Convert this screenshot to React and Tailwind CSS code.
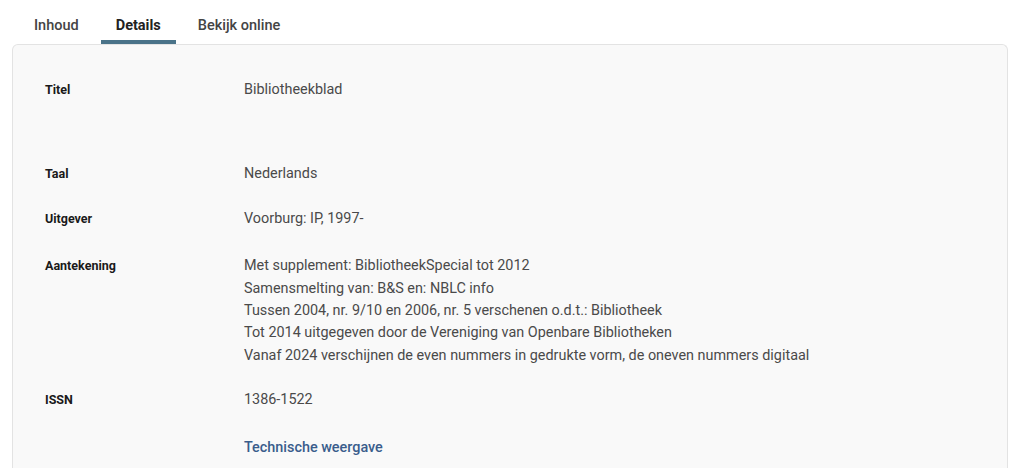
import React from "react";

const font = { fontFamily: "Roboto, 'Liberation Sans', sans-serif" };

function Row({ label, children, className = "" }) {
  return (
    <div className={`flex ${className}`}>
      <div className="w-[199px] shrink-0 text-[12.5px] font-bold leading-[22px] text-[#1a1a1a]">{label}</div>
      <div className="text-[14.4px] leading-[22.4px] text-[#4a4a4a]">{children}</div>
    </div>
  );
}

export default function App() {
  return (
    <div className="w-[1024px] h-[468px] overflow-hidden bg-white" style={font}>
      <div className="flex h-[44px] pl-[19px] gap-[7px]">
        <div className="flex items-center px-[15px] text-[14.5px] font-medium text-[#444] pt-[8px]">Inhoud</div>
        <div className="relative flex items-center px-[15px] text-[14.5px] font-bold text-[#222] pt-[8px]">
          Details
          <div className="absolute left-0 right-0 bottom-0 h-[4px] bg-[#4a7389]"></div>
        </div>
        <div className="flex items-center px-[15px] text-[14.5px] font-medium text-[#444] pt-[8px]">Bekijk online</div>
      </div>
      <div className="ml-[12px] mr-[16px] h-[440px] rounded-t-[6px] border border-b-0 border-[#e3e3e3] bg-[#f9f9f9] pl-[32px] pt-[34px]">
        <Row label="Titel">Bibliotheekblad</Row>
        <Row label="Taal" className="mt-[62px]">Nederlands</Row>
        <Row label="Uitgever" className="mt-[22px]">Voorburg: IP, 1997-</Row>
        <Row label="Aantekening" className="mt-[25px]">
          <div>Met supplement: BibliotheekSpecial tot 2012</div>
          <div>Samensmelting van: B&amp;S en: NBLC info</div>
          <div>Tussen 2004, nr. 9/10 en 2006, nr. 5 verschenen o.d.t.: Bibliotheek</div>
          <div>Tot 2014 uitgegeven door de Vereniging van Openbare Bibliotheken</div>
          <div>Vanaf 2024 verschijnen de even nummers in gedrukte vorm, de oneven nummers digitaal</div>
        </Row>
        <Row label="ISSN" className="mt-[22px]">1386-1522</Row>
        <Row label="" className="mt-[25px]">
          <span className="font-medium text-[#3a5d8c]">Technische weergave</span>
        </Row>
      </div>
    </div>
  );
}
